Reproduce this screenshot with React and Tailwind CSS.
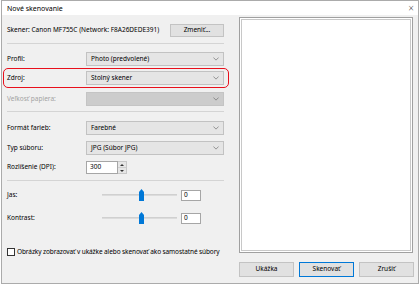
const Chevron = () => (
  <svg viewBox="0 0 8 5" className="w-[6px] h-[4px]" fill="none">
    <path d="M0.5 0.5L4 4L7.5 0.5" stroke="#6b6b6b" strokeWidth="0.9" />
  </svg>
);

const Select = ({ value, disabled = false }) => (
  <div
    className={`w-[138px] h-[14px] flex items-center justify-between px-[4px] border ${
      disabled ? "bg-[#cccccc] border-[#c4c4c4]" : "bg-[#e5e5e5] border-[#c2c2c2]"
    }`}
  >
    <span className="leading-none">{value}</span>
    <Chevron />
  </div>
);

const Row = ({ label, children, disabled = false, className = "" }) => (
  <div className={`flex items-center ${className}`}>
    <span className={`w-[79px] leading-none ${disabled ? "text-[#a3a3a3]" : ""}`}>{label}</span>
    {children}
  </div>
);

const Separator = ({ className = "" }) => <div className={`h-px bg-[#d4d4d4] ${className}`} />;

const Slider = () => (
  <div className="flex items-center ml-[16px]">
    <div className="relative w-[75px] h-[12px] flex items-center">
      <div className="w-full h-[2px] bg-[#dcdcdc] border-t border-[#d0d0d0]" />
      <svg viewBox="0 0 5 12" className="absolute left-[37px] top-0 w-[5px] h-[12px]">
        <path d="M0 3L2.5 0L5 3V12H0Z" fill="#0078d7" />
      </svg>
    </div>
    <div className="ml-[4px] w-[20px] h-[11px] bg-white border border-[#a6a6a6] flex items-center pl-[2px] leading-none">
      0
    </div>
  </div>
);

const Button = ({ children, primary = false }) => (
  <div
    className={`w-[55px] h-[15px] flex items-center justify-center leading-none bg-[#e1e1e1] border ${
      primary ? "border-[#0078d7]" : "border-[#c3c3c3]"
    }`}
  >
    {children}
  </div>
);

export default function App() {
  return (
    <div className="w-[420px] h-[286px] bg-white text-black text-[6.5px] font-['Noto_Sans',sans-serif]">
      <div className="ml-px w-[418px] h-[284px] border border-[#ababab] bg-[#f0f0f0] flex flex-col">
        {/* title bar */}
        <div className="h-[14px] bg-white flex items-center justify-between pl-[5px] pr-[4px] shrink-0">
          <span className="leading-none text-[7px]">Nové skenovanie</span>
          <span className="text-[10px] leading-none text-[#444] font-light">×</span>
        </div>

        <div className="flex flex-1">
          {/* left column */}
          <div className="ml-[5px] w-[217px] flex flex-col">
            <div className="mt-[9px] h-[13px] flex items-center justify-between">
              <span className="leading-none">Skener: Canon MF755C (Network: F8A26DEDE391)</span>
              <div className="w-[54px] h-[13px] bg-[#e1e1e1] border border-[#c3c3c3] flex items-center justify-center leading-none">
                Zmeniť...
              </div>
            </div>

            <Separator className="mt-[6px]" />

            <Row label="Profil:" className="mt-[8px]">
              <Select value="Photo (predvolené)" />
            </Row>

            <div className="mt-[2px] -ml-[4px] w-[226px] h-[20px] border border-[#e8101c] rounded-[5px] flex items-center pl-[3px]">
              <Row label="Zdroj:">
                <Select value="Stolný skener" />
              </Row>
            </div>

            <Row label="Veľkosť papiera:" disabled className="mt-[4px]">
              <Select value="" disabled />
            </Row>

            <Separator className="mt-[5px]" />

            <Row label="Formát farieb:" className="mt-[9px]">
              <Select value="Farebné" />
            </Row>

            <Row label="Typ súboru:" className="mt-[6px]">
              <Select value="JPG (Súbor JPG)" />
            </Row>

            <Row label="Rozlíšenie (DPI):" className="mt-[6px]">
              <div className="flex h-[13px]">
                <div className="w-[32px] bg-white border border-[#a6a6a6] flex items-center pl-[3px] leading-none">
                  300
                </div>
                <div className="w-[9px] flex flex-col bg-[#e6e6e6] border-y border-r border-[#c8c8c8]">
                  <div className="flex-1 flex items-center justify-center border-b border-[#cfcfcf]">
                    <svg viewBox="0 0 4 2" className="w-[4px] h-[2px]"><path d="M0 2L2 0L4 2Z" fill="#333" /></svg>
                  </div>
                  <div className="flex-1 flex items-center justify-center">
                    <svg viewBox="0 0 4 2" className="w-[4px] h-[2px]"><path d="M0 0L2 2L4 0Z" fill="#333" /></svg>
                  </div>
                </div>
              </div>
            </Row>

            <Separator className="mt-[6px]" />

            <div className="mt-[8px] flex items-center">
              <span className="w-[79px] leading-none">Jas:</span>
              <Slider />
            </div>

            <div className="mt-[11px] flex items-center">
              <span className="w-[79px] leading-none">Kontrast:</span>
              <Slider />
            </div>

            <div className="mt-[24px] flex items-center whitespace-nowrap">
              <div className="w-[8px] h-[8px] shrink-0 bg-white border border-[#333]" />
              <span className="ml-[2px] leading-none tracking-[-0.1px]">
                Obrázky zobrazovať v ukážke alebo skenovať ako samostatné súbory
              </span>
            </div>
          </div>

          {/* right column */}
          <div className="ml-[15px] w-[175px] flex flex-col">
            <div className="mt-[2px] w-[174px] h-[236px] border border-[#a0a0a0] bg-white p-px">
              <div className="w-full h-full border border-[#c8c8c8] bg-white" />
            </div>
            <div className="mt-[9px] flex gap-[5px]">
              <Button>Ukážka</Button>
              <Button primary>Skenovať</Button>
              <Button>Zrušiť</Button>
            </div>
          </div>
        </div>
      </div>
    </div>
  );
}
